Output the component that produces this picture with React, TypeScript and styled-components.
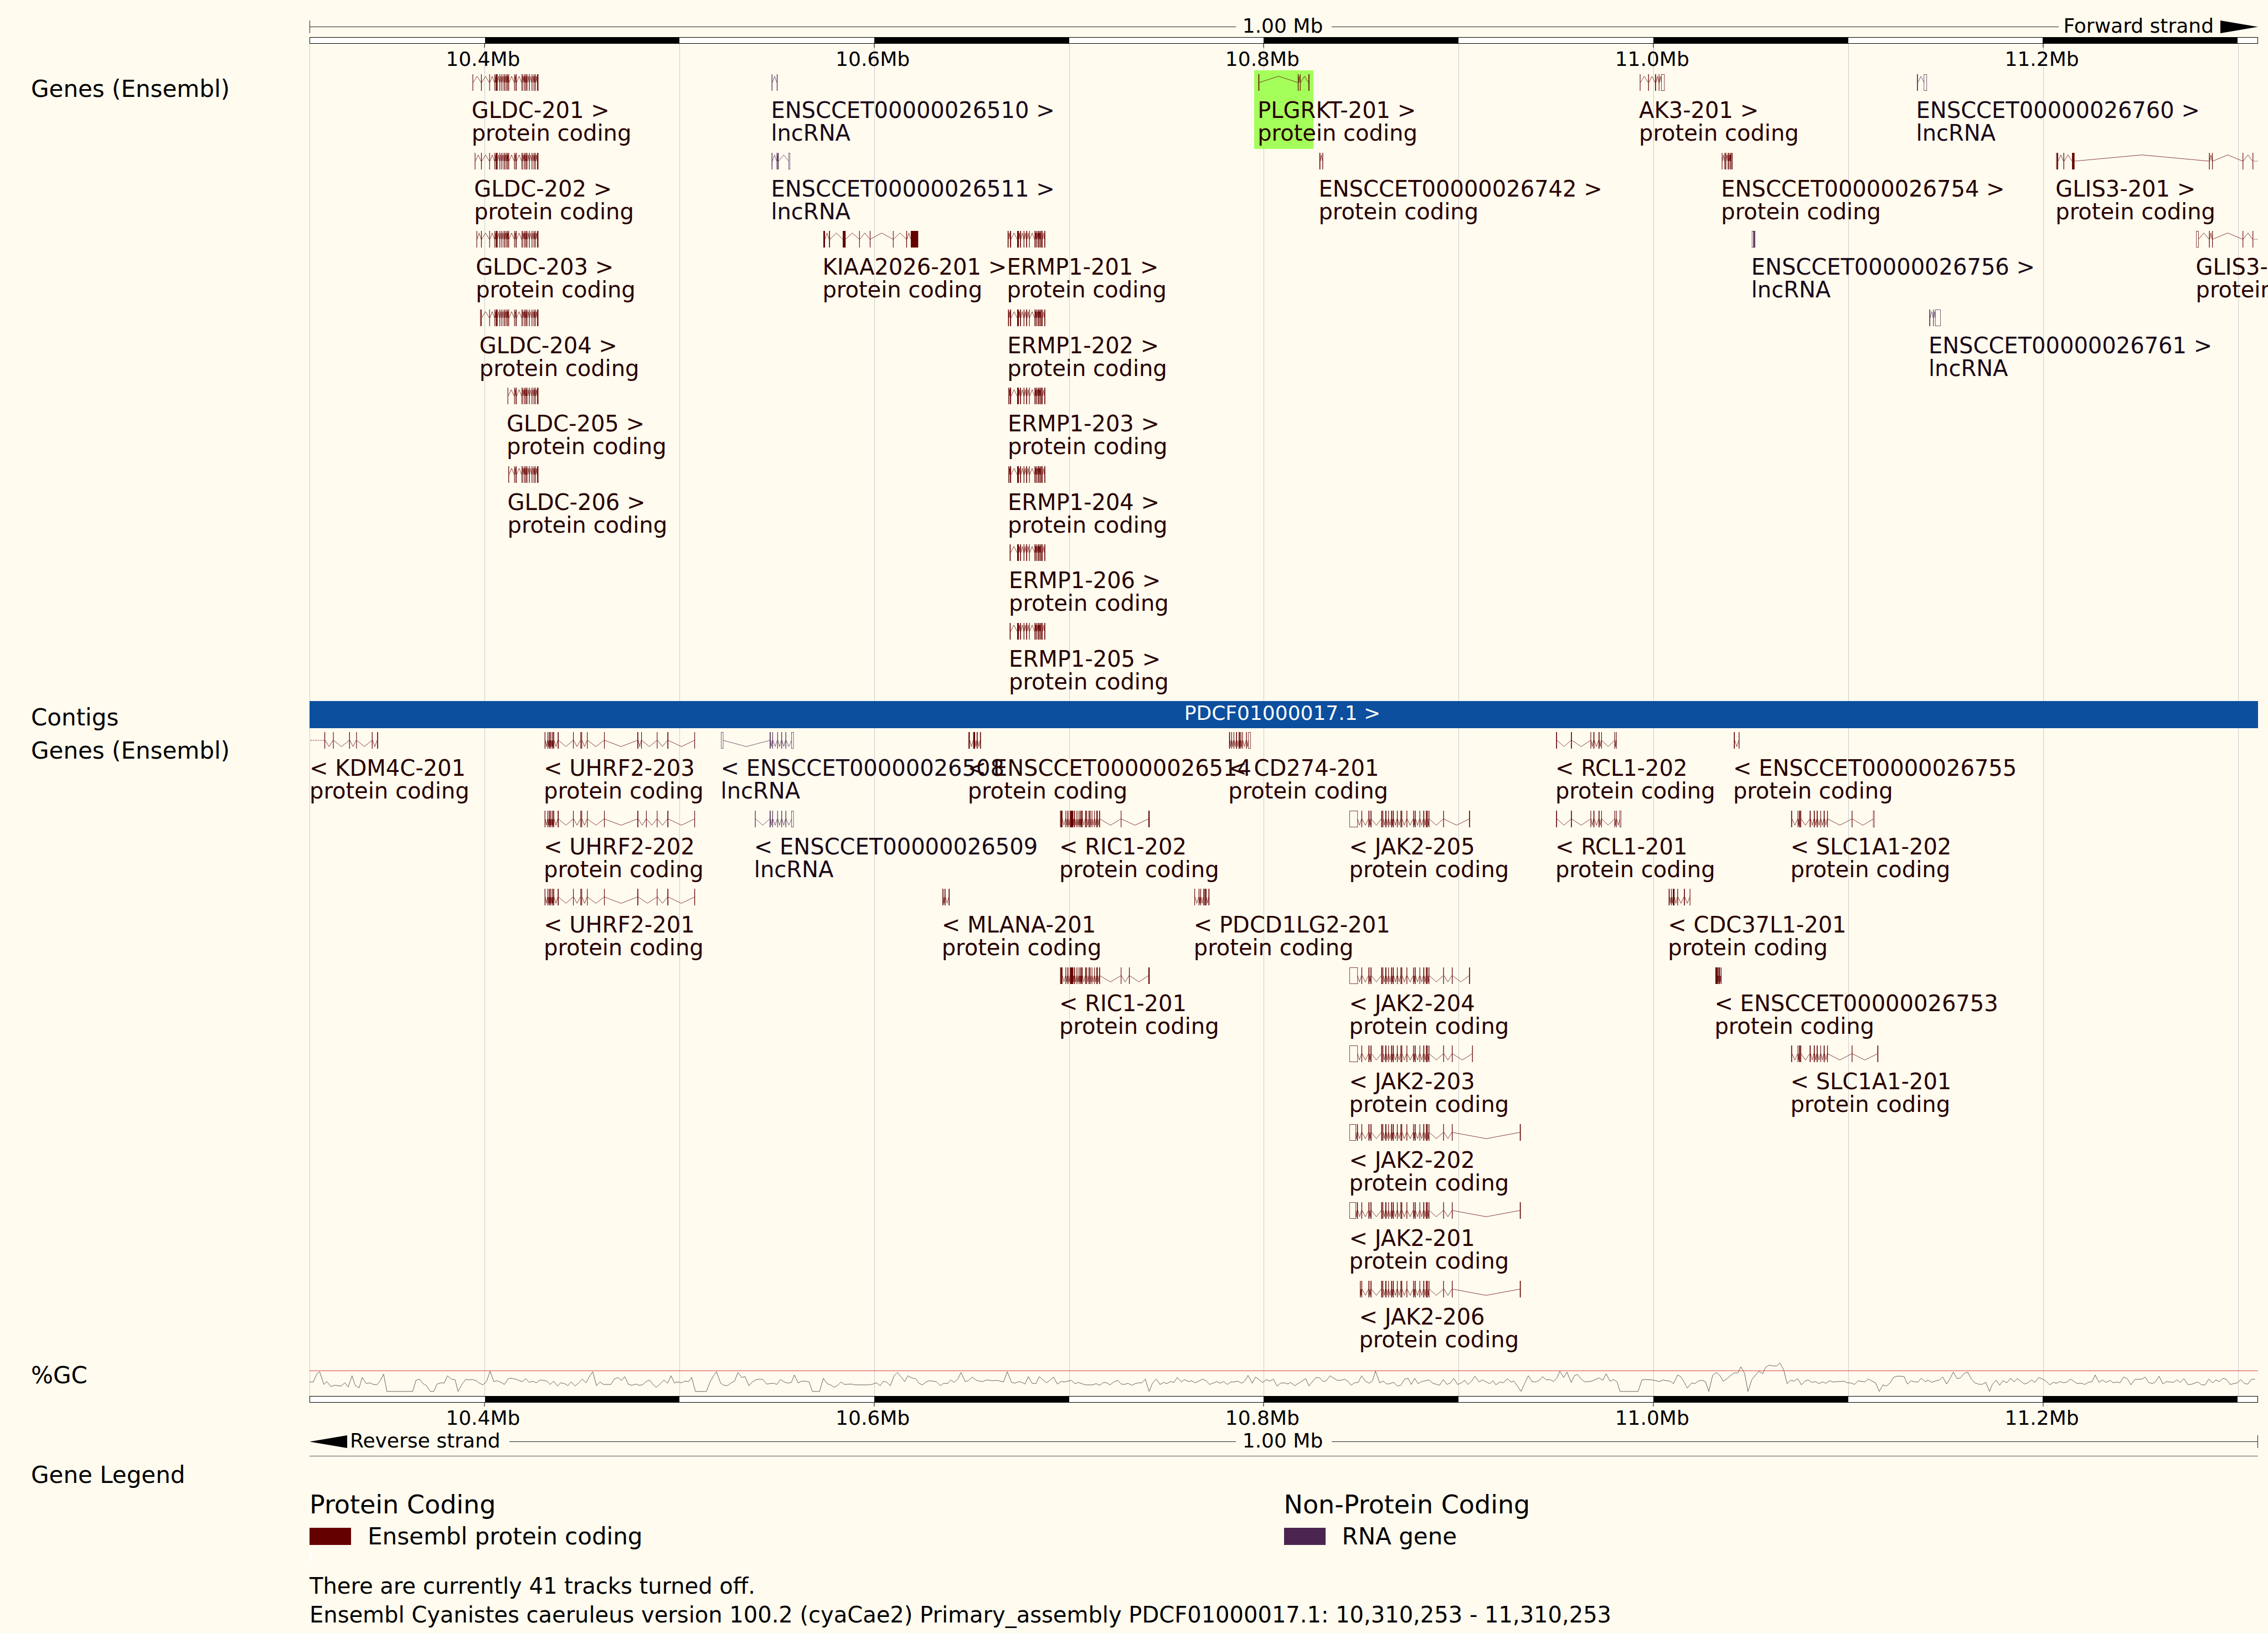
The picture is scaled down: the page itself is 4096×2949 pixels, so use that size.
import React from "react";
import styled, { createGlobalStyle } from "styled-components";

/* ---------- region and scale ---------- */

const REGION_START = 10.310253;
const REGION_LENGTH = 1;
const UNITS = 4725; // plot units per megabase, used by every transcript model
const LANE_COUNT = 8;

const MARKS = [10.4, 10.5, 10.6, 10.7, 10.8, 10.9, 11.0, 11.1, 11.2, 11.3];
const LABELLED = [10.4, 10.6, 10.8, 11.0, 11.2];

const mbToPercent = (mb: number) => `${((mb - REGION_START) / REGION_LENGTH) * 100}%`;
const unitToPercent = (u: number) => `${(u / UNITS) * 100}%`;

const colors = {
  page: "#fffbef",
  ink: "#000000",
  grid: "#cccccc",
  coding: "#640000",
  codingText: "#280000",
  rna: "#4b2550",
  rnaText: "#190919",
  contig: "#0c4f9e",
  highlight: "#a4ff5b",
};

/* ---------- data ----------
   Exon notation, in plot units:
     "x"     one thin exon        "x/w"   exon centred on x, w wide
     "a~b"   untranslated box     "a..b"  model continues outside the region */

type Kind = "coding" | "rna";
interface Transcript {
  lane: number;
  name: string;
  kind: Kind;
  exons: string;
}

const t = (lane: number, name: string, exons: string, kind: Kind = "coding"): Transcript => ({
  lane,
  name,
  exons,
  kind,
});

const GLDC_END =
  "515.5/2 520.4 523.7 527/2 533/1.5 539.5/1.5 544.5/1.5 548 553.5/3";
const GLDC =
  "416.8/1.5 436.7 449.5/1.5 454/4 461.5/1.5 466.5/1.5 472/2 476.5/1.5 480/1.5 483/1.5 497 501/2 " + GLDC_END;
const ERMP =
  "1718/4 1724/2 1732.5/1.5 1739/2 1745.6 1759.3/2 1762.5/1.5 1767/2.5 1770.5/1.5 1774/2.5 1777/1.5 1783/2";

const FORWARD: Transcript[] = [
  t(0, "GLDC-201", "396 " + GLDC),
  t(1, "GLDC-202", "401.4 " + GLDC),
  t(2, "GLDC-203", "405.6 " + GLDC),
  t(3, "GLDC-204", "414.5 " + GLDC),
  t(4, "GLDC-205", "481 497 501/2 " + GLDC_END),
  t(5, "GLDC-206", "483/1.5 497 501/2 " + GLDC_END),
  t(0, "ENSCCET00000026510", "1121.5/1.5 1134/1.5", "rna"),
  t(1, "ENSCCET00000026511", "1121.5/1.5 1133.5 1136.4/2 1162~1165", "rna"),
  t(2, "KIAA2026-201",
    "1248/4 1261/2 1296.5/7 1333.6 1359.4/1.3 1415.5 1448/1.5 1467/18"),
  t(2, "ERMP1-201", "1694/2 1700/2.5 " + ERMP),
  t(3, "ERMP1-202", "1695/2 1700/2.5 " + ERMP),
  t(4, "ERMP1-203", "1696/2 1700/2.5 " + ERMP),
  t(5, "ERMP1-204", "1696/2 1700/2.5 " + ERMP),
  t(6, "ERMP1-206", "1699/2 " + ERMP),
  t(7, "ERMP1-205", "1699/2 " + ERMP),
  t(0, "PLGRKT-201", "2302/2 2397.5/1.5 2402.4 2423.5/2"),
  t(1, "ENSCCET00000026742", "2450/2 2457/1.5"),
  t(0, "AK3-201", "3226.6 3247/1.5 3264/2 3272.5 3278.3~3285.5"),
  t(1, "ENSCCET00000026754", "3425.4 3432/1.5 3434.5/1.5 3440.5/2.5 3444.7/1.5 3447.4 3450/1.5"),
  t(2, "ENSCCET00000026756", "3498~3501.5 3503/2.5 3503.5~3505.5", "rna"),
  t(0, "ENSCCET00000026760", "3899/2 3915~3921.7", "rna"),
  t(3, "ENSCCET00000026761", "3929/2 3938/1.3 3942.5~3955", "rna"),
  t(1, "GLIS3-201", "4236.4 4239/2.5 4254/1.5 4277/6 4607/1.5 4614.4 4688.4 4712.6 4715..4724"),
  t(2, "GLIS3-202", "4575.6~4580.6 4607/1.5 4614.4 4688.4 4712.6 4715..4724"),
];

const UHRF2 =
  "571/1.5 578/1.5 582/2 585 588.8/1.5 592/2 603/2 639.8 657.6 660/1.5 673.7 715 796/2";
const LNC_508_TAIL = "1117/2 1123 1135 1145/1.5 1155/1.5 1169~1173.5";
const RIC1 =
  "1821/1.5 1824/3.5 1834/1.5 1839/2 1848/8 1855/2 1861/1.5 1866 1869.4/1.5 1873/3 1882/2 1884.7 " +
  "1890 1892.6/2 1897.4 1903.6 1909.7/3 1915.8/2 1968";
const RCL1 = "3024/2 3060/2 3107 3114.5/2 3127/2 3133 3165 3169";
const SLC1A1 =
  "3594/2 3609.3 3613/2 3616/2 3639/2 3649/2 3656/2 3664.4 3673/2 3681/1.5 3740.6/1.5";
const JAK2 =
  "2569/2 2574/2 2600/2 2602.8/1.5 2610/2.5 2616.6 2624/2 2628/2 2637.8/1.5 2646.4/1.5 2648.7/1.5 " +
  "2661/1.5 2677/1.5 2681/2 2692.4 2702/2 2708.4/2 2711/1.5 2714.7/1.5 2750/1.5";

const REVERSE: Transcript[] = [
  t(0, "KDM4C-201", "2..36 37/1.5 57.8 97/1.5 114 152/1.5 165/2"),
  t(0, "UHRF2-203", UHRF2 + " 805 843 869/2 934"),
  t(1, "UHRF2-202", UHRF2 + " 816.8 843 869/2 934"),
  t(2, "UHRF2-201", UHRF2 + " 843 869/2 934/1.5"),
  t(0, "ENSCCET00000026508", "998.5~1003 " + LNC_508_TAIL, "rna"),
  t(1, "ENSCCET00000026509", "1081/1.5 " + LNC_508_TAIL, "rna"),
  t(0, "ENSCCET00000026514", "1599.5/3 1611.7/4.5 1619/2 1627/2"),
  t(1, "RIC1-202", RIC1 + " 2035.7/3"),
  t(3, "RIC1-201", RIC1 + " 1988/1.5 2035.7/3"),
  t(2, "MLANA-201", "1536/2 1541/2 1551/2"),
  t(2, "PDCD1LG2-201", "2146.5 2157/1.5 2161/1.5 2168/1.5 2170.6 2173.5/3 2181/2"),
  t(0, "CD274-201", "2231/2 2236 2241.5 2248/2 2254.7/3 2258.4/1.5 2262.4 2272/1.5 2277~2281.7"),
  t(1, "JAK2-205", "2522.5~2541.4 2551.7/1.5 " + JAK2 + " 2813/2"),
  t(3, "JAK2-204", "2522.5~2541.4 2551.7/1.5 " + JAK2 + " 2771/1.5 2813/2"),
  t(4, "JAK2-203", "2522.5~2541.4 2551.7/1.5 " + JAK2 + " 2771/1.5 2820/1.5"),
  t(5, "JAK2-202", "2522.5~2537 2541/2 2551.7/1.5 " + JAK2 + " 2771/1.5 2936/2"),
  t(6, "JAK2-201", "2522.5~2537 2541/2 2551.7/1.5 " + JAK2 + " 2771/1.5 2936/2"),
  t(7, "JAK2-206", "2548/1.5 2551.7/1.5 " + JAK2 + " 2771/1.5 2936/2"),
  t(0, "RCL1-202", RCL1),
  t(1, "RCL1-201", RCL1 + " 3177.5~3180"),
  t(2, "CDC37L1-201", "3297/2 3302.4 3308/4 3317.7/1.5 3334/2 3347.6"),
  t(3, "ENSCCET00000026753", "3412.2/6 3417.6/2 3419.5 3423/1.5"),
  t(0, "ENSCCET00000026755", "3455/2 3466.6/1.5"),
  t(1, "SLC1A1-202", SLC1A1 + " 3792~3794.5"),
  t(4, "SLC1A1-201", SLC1A1 + " 3803/2"),
];

/* GC content: three consecutive windows, each 1568 units wide */
const GC_WINDOW = 1568;
const GC_SAMPLES = [
  "49,244 58,244 66,187 73,169 83,262 90,241 100,277 109,268 124,274 133,250 141,280 150,199 158,271 167,286 174,211 184,256 192,250 201,262 209,265 217,235 225,187 233,313 294,313 302,232 310,223 319,256 327,271 336,313 344,313 352,259 361,250 369,252 377,199 386,223 395,229 402,313 411,262 420,226 428,229 436,226 445,235 453,253 461,265 470,238 478,166 487,241 495,235 504,247 512,262 521,220 529,217 538,223 546,232 554,241 563,220 571,247 579,238 588,250 597,229 605,232 613,238 621,262 629,238 638,273 646,250 655,256 663,271 671,244 680,273 689,250 697,223 706,250 714,205 722,169 731,271 739,244 748,262 765,262 773,223 782,211 790,233 798,205 807,262 815,268 824,259 832,268 840,265 849,241 857,230 865,262 873,283 882,259 891,230 900,253 908,199 916,250 924,244 933,250 941,238 950,241 957,211 966,313 992,313 1001,241 1009,199 1016,169 1026,253 1034,268 1042,271 1051,250 1059,238 1067,175 1076,211 1084,205 1093,271 1101,244 1109,229 1118,223 1126,226 1135,259 1152,253 1159,262 1168,226 1177,244 1186,253 1194,247 1201,193 1210,250 1219,238 1228,238 1236,244 1244,313 1261,313 1270,217 1279,256 1287,265 1296,283 1304,268 1312,244 1320,262 1336,259 1345,265 1380,265 1388,259 1396,250 1405,271 1413,238 1421,247 1429,271 1438,199 1446,175 1455,208 1463,241 1471,199 1480,214 1489,220 1497,253 1505,265 1514,244 1522,235 1538,241 1548,271 1556,253 1565,256",
  "0,244 5,229 13,247 22,220 29,175 39,241 46,235 56,208 64,229 73,238 81,241 89,229 105,235 114,232 130,244 139,169 149,247 158,253 166,241 174,247 181,259 189,205 198,253 207,256 215,205 232,250 241,229 249,208 258,259 267,241 275,244 291,232 300,256 308,247 324,265 342,265 350,256 359,268 368,247 375,250 383,265 392,244 401,232 410,259 418,262 426,253 434,268 443,256 451,250 459,250 467,223 476,313 484,253 493,223 502,262 511,247 518,256 527,241 535,247 543,211 553,244 560,226 569,241 577,235 585,250 594,238 603,223 611,235 620,262 637,241 645,253 653,241 662,262 670,244 678,244 687,238 696,253 704,235 711,196 721,253 729,208 746,247 755,226 763,238 771,223 780,274 788,253 797,250 806,259 812,247 822,271 848,220 856,273 872,211 881,214 890,241 897,235 906,199 923,232 932,232 940,223 949,241 956,268 964,250 973,247 981,199 990,238 999,253 1007,235 1014,166 1024,250 1032,238 1041,259 1049,256 1057,247 1066,274 1074,268 1083,223 1091,217 1099,262 1107,217 1115,256 1124,241 1141,229 1150,253 1166,268 1175,226 1184,262 1192,250 1200,217 1209,262 1217,253 1226,232 1234,262 1243,235 1250,202 1260,244 1268,229 1285,256 1293,235 1300,265 1310,244 1318,250 1327,220 1336,244 1343,238 1352,277 1360,313 1369,250 1377,199 1386,241 1395,244 1403,232 1411,205 1420,229 1428,226 1437,241 1445,214 1452,166 1461,211 1469,172 1479,247 1487,196 1494,190 1503,223 1512,244 1528,238 1545,214 1554,232 1562,184",
  "0,220 3,238 12,226 20,244 27,313 70,313 79,229 87,226 104,229 121,241 129,229 138,235 146,238 154,256 164,193 171,205 179,244 187,289 197,250 205,256 214,235 222,232 230,241 238,313 247,196 256,175 264,196 272,238 280,223 290,196 298,178 307,178 314,133 323,181 331,313 340,229 349,193 357,166 366,184 373,136 382,121 390,127 399,127 407,106 416,157 424,256 432,232 441,238 449,220 458,265 466,238 474,229 483,247 491,241 500,256 508,244 516,253 525,235 533,244 559,238 567,250 575,250 584,262 593,235 608,244 617,223 626,238 634,250 643,313 652,265 660,274 668,253 677,211 685,202 694,202 702,205 710,259 719,235 727,244 735,244 743,217 752,241 760,232 768,247 778,235 786,229 794,208 803,259 811,220 819,172 828,220 836,214 845,181 853,172 862,223 870,250 878,259 887,262 896,247 905,313 912,259 921,232 929,268 937,235 946,250 955,217 963,244 971,220 988,259 996,250 1005,229 1013,247 1022,211 1031,223 1039,238 1048,265 1056,247 1064,253 1073,241 1081,250 1089,244 1098,223 1106,241 1114,256 1123,253 1131,262 1140,247 1149,241 1156,193 1165,247 1173,229 1182,247 1191,232 1199,250 1207,244 1215,250 1224,208 1233,223 1241,265 1250,226 1267,223 1275,208 1283,247 1292,256 1299,244 1308,202 1317,259 1325,241 1342,247 1350,229 1358,247 1367,220 1376,262 1384,262 1400,244 1409,265 1417,265 1426,223 1435,250 1443,229 1451,241 1460,217 1468,226 1477,262 1494,250 1502,226 1511,256 1519,259 1527,226 1536,223",
];
const GC_POINTS = GC_SAMPLES.flatMap((w, i) =>
  w.split(" ").map((p) => {
    const [x, y] = p.split(",").map(Number);
    return `${x + i * GC_WINDOW},${y}`;
  }),
).join(" ");

/* ---------- styles ---------- */

const GlobalStyle = createGlobalStyle`
  * { box-sizing: border-box; }
  html, body { margin: 0; padding: 0; background: ${colors.page}; }
  body { font-family: "DejaVu Sans", Verdana, sans-serif; color: ${colors.ink}; }
  h2, p { margin: 0; font-weight: 400; }
`;

const Page = styled.main`
  min-height: 100vh;
  overflow: hidden;
  padding-top: 37px;
  background: ${colors.page};
`;

const Row = styled.section<{ $gap?: number }>`
  display: grid;
  grid-template-columns: 559px minmax(0, 1fr);
  padding-top: ${(p) => p.$gap ?? 0}px;
  padding-right: 18px;
`;

const TrackName = styled.h2<{ $inset?: number }>`
  padding: ${(p) => p.$inset ?? 13}px 0 0 56px;
  font-size: 42px;
  line-height: 38px;
  white-space: nowrap;
`;

const TrackCell = styled.div`
  grid-column: 2;
  min-width: 0;
`;

const Body = styled.div`
  position: relative;
  isolation: isolate;
`;

const GridOverlay = styled.div`
  position: absolute;
  inset: 0 18px 0 559px;
  z-index: -1;
`;

const GridLine = styled.i`
  position: absolute;
  top: 0;
  bottom: 0;
  width: 1px;
  background: ${colors.grid};
`;

const Strand = styled.div`
  display: grid;
  grid-template-columns: 1fr auto 1fr;
  height: 23px;
`;

const StrandSide = styled.div`
  display: flex;
  align-items: center;
  min-width: 0;
`;

const StrandRule = styled.span`
  flex: 1;
  height: 1px;
  background: #222;
`;

const StrandEnd = styled.span`
  width: 1px;
  height: 23px;
  background: #222;
`;

const StrandText = styled.span<{ $before: number; $after: number }>`
  align-self: flex-start;
  padding: 0 ${(p) => p.$after}px 0 ${(p) => p.$before}px;
  font-size: 36px;
  line-height: 20px;
  white-space: nowrap;
`;

const Arrow = styled.svg`
  display: block;
  flex: none;
  width: 68px;
  height: 23px;
`;

const RulerBar = styled.div`
  display: flex;
  height: 12px;
  border: 1px solid ${colors.ink};
  background: #fff;
`;

const RulerSegment = styled.span<{ $span: number; $dark: boolean }>`
  flex: ${(p) => p.$span} 0 0;
  background: ${(p) => (p.$dark ? colors.ink : "#fff")};
`;

const AxisLabels = styled.div`
  position: relative;
  height: 48px;
`;

const AxisLabel = styled.div`
  position: absolute;
  top: 0;
  display: flex;
  flex-direction: column;
  align-items: center;
  transform: translateX(-50%);
  font-size: 36px;
  line-height: 42px;

  &::before {
    content: "";
    width: 1px;
    height: 7px;
    background: ${colors.ink};
  }
`;

const AxisText = styled.span`
  padding-right: 5px;
`;

const Lanes = styled.div`
  display: grid;
  grid-template-rows: repeat(${LANE_COUNT}, 1fr);
  height: 1132px;
`;

const Lane = styled.div`
  position: relative;
  padding-top: 7px;
`;

const Highlight = styled.div`
  position: absolute;
  top: 0;
  bottom: 0;
  z-index: -1;
  background: ${colors.highlight};
`;

const Models = styled.svg`
  display: block;
  width: 100%;
  height: 30px;
  overflow: visible;
`;

const LabelStrip = styled.div`
  position: relative;
  height: 82px;
  margin-top: 15px;
`;

const TranscriptLabel = styled.div<{ $kind: Kind }>`
  position: absolute;
  top: 0;
  display: flex;
  flex-direction: column;
  font-size: 40px;
  line-height: 41px;
  white-space: nowrap;
  color: ${(p) => (p.$kind === "rna" ? colors.rnaText : colors.codingText)};
`;

const ContigBar = styled.div`
  height: 49px;
  margin-top: 7px;
  padding-right: 5px;
  background: ${colors.contig};
  color: #fff;
  font-size: 36px;
  line-height: 44px;
  text-align: center;
`;

const GcPlot = styled.svg`
  display: block;
  width: 100%;
  height: 57px;
  margin: 13px 0 4px;
  overflow: visible;
`;

const StrandFooter = styled.div`
  padding: 11px 0 14px;
  border-bottom: 1px solid #555;
`;

const LegendCell = styled(TrackCell)`
  padding-top: 59px;
`;

const LegendColumns = styled.div`
  display: grid;
  grid-template-columns: 1fr 1fr;
`;

const LegendHeading = styled.h2`
  font-size: 46px;
  line-height: 56px;
`;

const LegendEntry = styled.div`
  display: flex;
  align-items: center;
  gap: 30px;
  margin-top: 14px;
  font-size: 42px;
  line-height: 31px;
`;

const Swatch = styled.span<{ $kind: Kind }>`
  width: 75px;
  height: 31px;
  background: ${(p) => colors[p.$kind]};
`;

const LegendMark = styled.div`
  width: 4px;
  height: 17px;
  margin: 13px 0 18px;
  background: #fff;
`;

const Note = styled.p`
  font-size: 40px;
  line-height: 52px;
`;

/* ---------- parts ---------- */

interface Part {
  from: number;
  to: number;
  shape: "exon" | "box" | "dash";
}

const THIN_EXON = 1.3;

const parseExons = (exons: string): Part[] =>
  exons.split(" ").map((token) => {
    if (token.includes("..")) {
      const [a, b] = token.split("..").map(Number);
      return { from: a, to: b, shape: "dash" };
    }
    if (token.includes("~")) {
      const [a, b] = token.split("~").map(Number);
      return { from: a, to: b, shape: "box" };
    }
    const [x, given = THIN_EXON] = token.split("/").map(Number);
    const w = given < 2.5 ? given + 0.2 : given;
    return { from: x - w / 2, to: x + w / 2, shape: "exon" };
  });

function Model({ item, reverse }: { item: Transcript; reverse: boolean }) {
  const parts = parseExons(item.exons);
  const color = colors[item.kind];
  const bend = reverse ? 35 : 5;
  return (
    <g fill="none" stroke={color} strokeWidth={1}>
      {parts.map((p, i) => {
        const next = parts[i + 1];
        const joined = next && p.shape !== "dash" && next.shape !== "dash" && next.from - p.to > 1;
        return (
          <React.Fragment key={i}>
            {p.shape === "exon" && (
              <rect x={p.from} y={0} width={p.to - p.from} height={40} fill={color} stroke="none" />
            )}
            {p.shape === "box" && <rect x={p.from} y={0.5} width={p.to - p.from} height={39} />}
            {p.shape === "dash" && <line x1={p.from} x2={p.to} y1={20} y2={20} strokeDasharray="4 2" />}
            {joined && <polyline points={`${p.to},20 ${(p.to + next.from) / 2},${bend} ${next.from},20`} />}
          </React.Fragment>
        );
      })}
    </g>
  );
}

function GeneLanes({ items, reverse = false }: { items: Transcript[]; reverse?: boolean }) {
  return (
    <Lanes>
      {Array.from({ length: LANE_COUNT }, (_, lane) => {
        const own = items.filter((i) => i.lane === lane);
        return (
          <Lane key={lane}>
            {!reverse && lane === 0 && (
              <Highlight style={{ left: unitToPercent(2291), width: unitToPercent(143) }} />
            )}
            <Models viewBox={`0 0 ${UNITS} 40`} preserveAspectRatio="none" aria-hidden="true">
              {own.map((i) => (
                <Model key={i.name} item={i} reverse={reverse} />
              ))}
            </Models>
            <LabelStrip>
              {own.map((i) => (
                <TranscriptLabel
                  key={i.name}
                  $kind={i.kind}
                  style={{ left: unitToPercent(Math.max(0, Math.round(parseExons(i.exons)[0].from) - 2)) }}
                >
                  <span>{reverse ? `< ${i.name}` : `${i.name} >`}</span>
                  <span>{i.kind === "rna" ? "lncRNA" : "protein coding"}</span>
                </TranscriptLabel>
              ))}
            </LabelStrip>
          </Lane>
        );
      })}
    </Lanes>
  );
}

function Ruler() {
  const stops = [REGION_START, ...MARKS, REGION_START + REGION_LENGTH];
  return (
    <RulerBar>
      {stops.slice(1).map((stop, i) => (
        <RulerSegment key={stop} $span={Math.round((stop - stops[i]) * 1e6)} $dark={i % 2 === 1} />
      ))}
    </RulerBar>
  );
}

function Axis() {
  return (
    <AxisLabels>
      {LABELLED.map((mb) => (
        <AxisLabel key={mb} style={{ left: mbToPercent(mb) }}>
          <AxisText>{mb.toFixed(1)}Mb</AxisText>
        </AxisLabel>
      ))}
    </AxisLabels>
  );
}

export default function App() {
  return (
    <>
      <GlobalStyle />
      <Page>
        <Row>
          <TrackCell>
            <Strand>
              <StrandSide>
                <StrandEnd />
                <StrandRule />
              </StrandSide>
              <StrandText $before={12} $after={16}>1.00 Mb</StrandText>
              <StrandSide>
                <StrandRule />
                <StrandText $before={8} $after={12}>Forward strand</StrandText>
                <Arrow viewBox="0 0 68 23" aria-hidden="true">
                  <path d="M0 0L68 11.5L0 23Z" />
                </Arrow>
              </StrandSide>
            </Strand>
          </TrackCell>
        </Row>
        <Row $gap={7}>
          <TrackCell>
            <Ruler />
          </TrackCell>
        </Row>
        <Body>
          <GridOverlay>
            {[REGION_START, ...MARKS].map((mb) => (
              <GridLine key={mb} style={{ left: mbToPercent(mb) }} />
            ))}
          </GridOverlay>
          <Row>
            <TrackCell>
              <Axis />
            </TrackCell>
          </Row>
          <Row>
            <TrackName $inset={15}>Genes (Ensembl)</TrackName>
            <TrackCell>
              <GeneLanes items={FORWARD} />
            </TrackCell>
          </Row>
          <Row>
            <TrackName $inset={18}>Contigs</TrackName>
            <TrackCell>
              <ContigBar>PDCF01000017.1 &gt;</ContigBar>
            </TrackCell>
          </Row>
          <Row>
            <TrackName $inset={22}>Genes (Ensembl)</TrackName>
            <TrackCell>
              <GeneLanes items={REVERSE} reverse />
            </TrackCell>
          </Row>
          <Row>
            <TrackName $inset={18}>%GC</TrackName>
            <TrackCell>
              <GcPlot viewBox="49 100 4630 230" preserveAspectRatio="none" aria-hidden="true">
                <rect x="49" y="161.5" width="4630" height="3" fill="#dc0000" />
                <polyline
                  points={GC_POINTS}
                  fill="none"
                  stroke="#333"
                  strokeWidth="0.75"
                  vectorEffect="non-scaling-stroke"
                />
              </GcPlot>
            </TrackCell>
          </Row>
        </Body>
        <Row>
          <TrackCell>
            <Ruler />
            <Axis />
            <StrandFooter>
              <Strand>
                <StrandSide>
                  <Arrow viewBox="0 0 68 23" aria-hidden="true">
                    <path d="M68 0L0 11.5L68 23Z" />
                  </Arrow>
                  <StrandText $before={5} $after={16}>Reverse strand</StrandText>
                  <StrandRule />
                </StrandSide>
                <StrandText $before={12} $after={16}>1.00 Mb</StrandText>
                <StrandSide>
                  <StrandRule />
                  <StrandEnd />
                </StrandSide>
              </Strand>
            </StrandFooter>
          </TrackCell>
        </Row>
        <Row>
          <TrackName $inset={15}>Gene Legend</TrackName>
          <LegendCell>
            <LegendColumns>
              <div>
                <LegendHeading>Protein Coding</LegendHeading>
                <LegendEntry>
                  <Swatch $kind="coding" />
                  Ensembl protein coding
                </LegendEntry>
              </div>
              <div>
                <LegendHeading>Non-Protein Coding</LegendHeading>
                <LegendEntry>
                  <Swatch $kind="rna" />
                  RNA gene
                </LegendEntry>
              </div>
            </LegendColumns>
            <LegendMark />
            <Note>There are currently 41 tracks turned off.</Note>
            <Note>
              Ensembl Cyanistes caeruleus version 100.2 (cyaCae2) Primary_assembly PDCF01000017.1: 10,310,253 - 11,310,253
            </Note>
          </LegendCell>
        </Row>
      </Page>
    </>
  );
}
